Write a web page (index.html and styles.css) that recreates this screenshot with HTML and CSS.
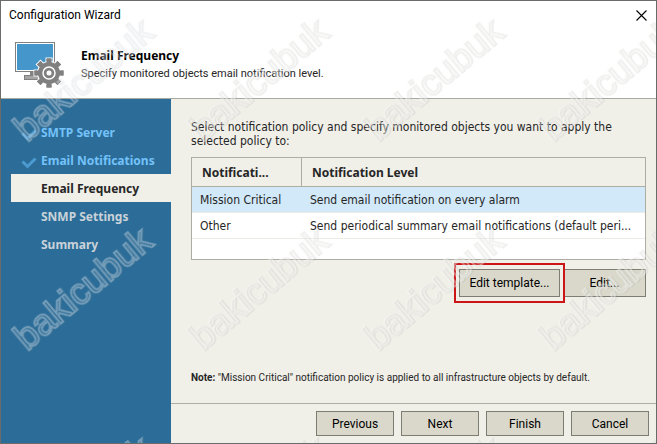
FILE: index.html
```html
<!DOCTYPE html>
<html lang="en">
<head>
    <meta charset="UTF-8">
    <meta name="viewport" content="width=device-width, initial-scale=1.0">
    <title>Configuration Wizard</title>
    <link rel="stylesheet" href="styles.css">
</head>
<body>

    <div class="window">
        <header class="header">
            <div class="titlebar">
                <span>Configuration Wizard</span>
                <button class="close" type="button" aria-label="Close">
                    <svg width="11" height="11" viewBox="0 0 11 11"><path d="M.5 .5l10 10M10.5 .5l-10 10" stroke="#000" stroke-width="1.1"/></svg>
                </button>
            </div>
            <div class="heading">
                <svg class="logo" width="50" height="48" viewBox="0 0 50 48">
                    <rect x="15" y="29" width="6" height="6" fill="#838383"/>
                    <rect x="9.500" y="33.500" width="15" height="4" fill="#a5a5a5" stroke="#808080"/>
                    <rect x=".5" y=".5" width="39" height="29" fill="#fff" stroke="#808080"/>
                    <rect x="2" y="2" width="36" height="26" fill="#4596cb"/>
                    <g transform="translate(34 31)">
                        <g fill="#808080" stroke="#fff" stroke-width="2" paint-order="stroke">
                            <path id="teeth" d="M-2.500-14.500h5v5h-5zM-2.500 9.500h5v5h-5zM-14.500-2.500h5v5h-5zM9.500-2.500h5v5h-5z"/>
                            <use href="#teeth" transform="rotate(45)"/>
                            <circle r="11"/>
                        </g>
                        <g fill="#808080">
                            <use href="#teeth"/>
                            <use href="#teeth" transform="rotate(45)"/>
                        </g>
                        <circle r="6" fill="none" stroke="#fff" stroke-width="1.500"/>
                        <circle r="2.500" fill="#fff"/>
                    </g>
                </svg>
                <div>
                    <h1>Email Frequency</h1>
                    <p>Specify monitored objects email notification level.</p>
                </div>
            </div>
        </header>

        <div class="body">
            <nav class="steps">
                <a class="step done" href="#smtp"><svg width="16" height="12" viewBox="0 0 16 12"><path d="M1.500 4.500l5 5 8-8" fill="none" stroke="#4b9bd0" stroke-width="3"/></svg>SMTP Server</a>
                <a class="step done" href="#notifications"><svg width="16" height="12" viewBox="0 0 16 12"><path d="M1.500 4.500l5 5 8-8" fill="none" stroke="#4b9bd0" stroke-width="3"/></svg>Email Notifications</a>
                <a class="step active" href="#frequency">Email Frequency</a>
                <a class="step" href="#snmp">SNMP Settings</a>
                <a class="step" href="#summary">Summary</a>
            </nav>

            <main class="main">
                <section class="content">
                    <p class="intro">Select notification policy and specify monitored objects you want to apply the selected policy to:</p>

                    <div class="list">
                        <table>
                            <thead>
                                <tr><th class="policy">Notificati...</th><th>Notification Level</th></tr>
                            </thead>
                            <tbody>
                                <tr class="selected"><td>Mission Critical</td><td>Send email notification on every alarm</td></tr>
                                <tr><td>Other</td><td>Send periodical summary email notifications (default peri...</td></tr>
                            </tbody>
                        </table>
                    </div>

                    <div class="actions">
                        <div class="marked"><button class="template" type="button">Edit template...</button></div>
                        <button class="edit" type="button">Edit...</button>
                    </div>

                    <p class="note"><b>Note:</b> "Mission Critical" notification policy is applied to all infrastructure objects by default.</p>
                </section>

                <footer class="footer">
                    <button type="button">Previous</button>
                    <button type="button">Next</button>
                    <button type="button">Finish</button>
                    <button type="button">Cancel</button>
                </footer>
            </main>
        </div>

        <div class="watermarks" aria-hidden="true">
            <span class="light">bakicubuk</span><span>bakicubuk</span><span>bakicubuk</span><span>bakicubuk</span>
            <span class="light">bakicubuk</span><span>bakicubuk</span><span>bakicubuk</span><span>bakicubuk</span>
            <span class="light">bakicubuk</span><span>bakicubuk</span><span>bakicubuk</span><span>bakicubuk</span>
        </div>
    </div>

</body>
</html>
```
FILE: styles.css
```css
* {
    box-sizing: border-box;
}

body {
    margin: 0;
    font-family: "DejaVu Sans Condensed", Tahoma, sans-serif;
    font-size: 12px;
    color: #262626;
}

h1, p {
    margin: 0;
}

.window {
    position: relative;
    min-height: 100vh;
    display: flex;
    flex-direction: column;
    overflow: hidden;
    background-color: #f0efe8;
    border: 1px solid #6b6b6b;
}

.header {
    height: 98px;
    background-color: #fff;
    border-bottom: 1px solid #a9a9a4;
}

.titlebar {
    height: 28px;
    display: flex;
    align-items: center;
    justify-content: space-between;
    padding: 0 9px 0 8px;
    font-family: Roboto, sans-serif;
    color: #000;
}

.close {
    display: flex;
    padding: 0;
    border: none;
    background: none;
}

.heading {
    display: flex;
    gap: 16px;
    padding: 13px 14px 0;
}

.heading h1 {
    margin-top: 5px;
    font-family: "Noto Sans", sans-serif;
    font-size: 12px;
    line-height: 18px;
    color: #000;
}

.heading p {
    font-family: Roboto, sans-serif;
    font-size: 11px;
    line-height: 18px;
}

.body {
    flex: 1;
    display: flex;
}

.steps {
    width: 170px;
    padding: 19px 0 0 10px;
    background-color: #2b6d98;
}

.step {
    display: flex;
    align-items: center;
    height: 28px;
    padding-left: 30px;
    font-family: "Noto Sans", sans-serif;
    font-weight: bold;
    color: #c9d2d8;
    text-decoration: none;
}

.step svg {
    margin: 6px 4px 0 -20px;
}

.done {
    color: #74c2fa;
}

.active {
    background-color: #f0efe8;
    color: #262626;
}

.main {
    flex: 1;
    min-width: 0;
    display: flex;
    flex-direction: column;
}

.content {
    flex: 1;
    display: flex;
    flex-direction: column;
    padding: 21px 10px 16px 20px;
}

.intro {
    line-height: 14px;
    margin-bottom: 9px;
}

.list {
    height: 103px;
    background-color: #fff;
    border: 1px solid #adada4;
}

table {
    width: 100%;
    table-layout: fixed;
    border-collapse: separate;
    border-spacing: 0;
}

th, td {
    padding: 0 8px;
    text-align: left;
    white-space: nowrap;
}

th {
    height: 29px;
    font-family: "Noto Sans", sans-serif;
    background-color: #f0efe8;
    border-bottom: 1px solid #adada4;
    padding: 0 10px;
}

.policy {
    width: 110px;
    border-right: 1px solid #adada4;
}

td {
    height: 26px;
    border-bottom: 1px solid #ecebe5;
}

.selected {
    background-color: #d1e9f9;
}

.actions {
    display: flex;
    justify-content: flex-end;
    gap: 3px;
    margin-top: 9px;
}

.actions button, .footer button {
    padding: 0;
    background-color: #d9d8cb;
    border: 1px solid #7d7d73;
    font-family: Roboto, sans-serif;
    font-size: 12px;
    color: #000;
}

.actions button {
    height: 28px;
}

.actions .template {
    width: 101px;
}

.actions .edit {
    width: 83px;
}

.marked {
    position: relative;
}

.marked::after {
    content: "";
    position: absolute;
    inset: -6px -5px;
    border: 2px solid #cc1517;
}

.note {
    margin-top: auto;
    font-family: Roboto, sans-serif;
    font-size: 10px;
    line-height: 18px;
}

.footer {
    display: flex;
    justify-content: flex-end;
    gap: 7px;
    padding: 7px;
    border-top: 1px solid #adada4;
}

.footer button {
    width: 78px;
    height: 25px;
}

/* stamp repeated over the whole window */
.watermarks {
    position: absolute;
    inset: 0;
    overflow: hidden;
    pointer-events: none;
    display: grid;
    grid-template-columns: repeat(4, 175px);
    grid-template-rows: repeat(3, 209px);
}

.watermarks span {
    place-self: start;
    margin: 57px 0 0 -1px;
    font-family: "Liberation Sans", Arial, sans-serif;
    font-size: 37px;
    line-height: 44px;
    color: transparent;
    -webkit-text-stroke: 2px rgba(250, 250, 248, 0.45);
    filter: drop-shadow(1px 1px 0 rgba(120, 120, 120, 0.3));
    transform: rotate(-40deg);
}

.watermarks .light {
    -webkit-text-stroke-color: rgba(240, 244, 248, 0.35);
}
```
